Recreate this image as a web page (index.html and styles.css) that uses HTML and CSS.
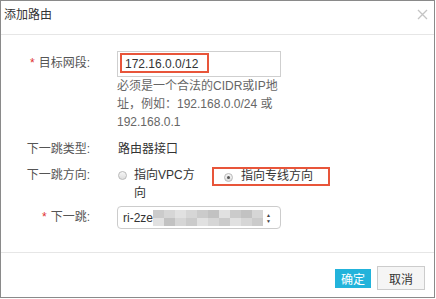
FILE: index.html
```html
<!DOCTYPE html>
<html lang="zh-CN">
<head>
  <meta charset="UTF-8" />
  <title>添加路由</title>
  <link rel="stylesheet" href="styles.css">
</head>
<body>

  <div class="dialog">
    <div class="dialog-header">
      <span class="dialog-title">添加路由</span>
      <svg class="close" width="11" height="11" viewBox="0 0 11 11">
        <path d="M1 1L10 10M10 1L1 10" stroke="#c4c4c4" stroke-width="1.3" fill="none" />
      </svg>
    </div>

    <div class="dialog-body">
      <div class="row row-cidr">
        <label class="label"><span class="req">*</span>目标网段:</label>
        <div class="control">
          <div class="input">
            <span class="mark-input">172.16.0.0/12</span>
          </div>
          <p class="help">必须是一个合法的CIDR或IP地址，例如：192.168.0.0/24 或 192.168.0.1</p>
        </div>
      </div>

      <div class="row row-type">
        <label class="label">下一跳类型:</label>
        <div class="control value">路由器接口</div>
      </div>

      <div class="row row-dir">
        <label class="label">下一跳方向:</label>
        <div class="control radios">
          <div class="radio-item">
            <span class="radio"></span>
            <span class="radio-text">指向VPC方向</span>
          </div>
          <div class="radio-item mark-radio">
            <span class="radio checked"></span>
            <span>指向专线方向</span>
          </div>
        </div>
      </div>

      <div class="row row-next">
        <label class="label"><span class="req">*</span>下一跳:</label>
        <div class="control">
          <div class="select">
            <span class="select-text">ri-2ze</span>
            <span class="mosaic">
              <i class="g2"></i><i class="g1"></i><i class="g3"></i><i class="g1"></i><i class="g2"></i><i class="g4"></i><i class="g3"></i><i class="g2"></i><i class="g4"></i><i class="g1"></i>
              <i class="g3"></i><i class="g4"></i><i class="g1"></i><i class="g2"></i><i class="g3"></i><i class="g1"></i><i class="g2"></i><i class="g3"></i><i class="g1"></i><i class="g2"></i>
            </span>
            <span class="arrows">▲<br>▼</span>
          </div>
        </div>
      </div>
    </div>

    <div class="dialog-footer">
      <button class="btn btn-primary">确定</button>
      <button class="btn btn-default">取消</button>
    </div>
  </div>

</body>
</html>
```

FILE: styles.css
```css
body {
  margin: 0;
  background-color: #ffffff;
  font-family: "Liberation Sans", "Noto Sans CJK SC", sans-serif;
  font-size: 12px;
  color: #333333;
}
.dialog {
  width: 433px;
  height: 296px;
  border: 1px solid #8a8a8a;
  display: flex;
  flex-direction: column;
}
.dialog-header {
  height: 33px;
  border-bottom: 1px solid #e6e6e6;
  display: flex;
  justify-content: space-between;
  align-items: flex-start;
  padding: 5px 6px 0 3px;
  box-sizing: border-box;
  height: 34px;
}
.dialog-title {
  font-size: 12px;
  line-height: 18px;
  color: #333333;
}
.close {
  margin-top: 3px;
}
.dialog-body {
  flex: 1;
  padding-top: 16px;
}
.row {
  display: flex;
  align-items: flex-start;
}
.label {
  width: 89px;
  margin-right: 27px;
  text-align: right;
  color: #555555;
  line-height: 18px;
  flex-shrink: 0;
}
.req {
  color: #e03030;
  margin-right: 4px;
}
.control {
  line-height: 18px;
}
.row-cidr .label {
  line-height: 25px;
}
.input {
  width: 160px;
  height: 23px;
  border: 1px solid #cfcfcf;
  padding: 1px 0 0 2px;
  box-sizing: content-box;
}
.mark-input {
  display: block;
  width: 82px;
  height: 16px;
  border: 2px solid #e8553a;
  padding-left: 3px;
  font-size: 12px;
  line-height: 18px;
  color: #333333;
}
.help {
  margin: 0;
  width: 162px;
  color: #666666;
  line-height: 18px;
}
.row-type {
  margin-top: 9px;
}
.value {
  margin-left: 1px;
}
.row-dir {
  margin-top: 8px;
}
.radios {
  display: flex;
  align-items: flex-start;
}
.radio-item {
  display: flex;
  align-items: flex-start;
}
.radio {
  width: 7px;
  height: 7px;
  border: 1px solid #b9b9b9;
  border-radius: 50%;
  background: linear-gradient(#f6f6f6, #dedede);
  margin: 5px 7px 0 1px;
  position: relative;
}
.radio.checked::after {
  content: "";
  position: absolute;
  left: 2px;
  top: 2px;
  width: 3px;
  height: 3px;
  border-radius: 50%;
  background-color: #555555;
}
.radio-text {
  width: 66px;
}
.mark-radio {
  margin-left: 12px;
  margin-top: 1px;
  width: 104px;
  height: 15px;
  border: 2px solid #e8553a;
  padding-left: 10px;
  line-height: 15px;
}
.mark-radio .radio {
  margin: 4px 8px 0 0;
}
.row-next {
  margin-top: 4px;
}
.row-next .label {
  line-height: 23px;
}
.select {
  width: 162px;
  height: 21px;
  border: 1px solid #cccccc;
  border-radius: 4px;
  display: flex;
  align-items: center;
  padding-left: 5px;
  box-sizing: content-box;
  width: 157px;
}
.select-text {
  font-size: 12px;
  color: #333333;
}
.mosaic {
  display: grid;
  grid-template-columns: repeat(10, 11px);
  grid-template-rows: 8px 8px;
  margin-left: 0;
}
.mosaic i {
  display: block;
}
.g1 { background-color: #d6d6d6; }
.g2 { background-color: #cbcbcb; }
.g3 { background-color: #e1e1e1; }
.g4 { background-color: #c2c2c2; }
.arrows {
  font-size: 5px;
  line-height: 6px;
  color: #444444;
  margin-left: 3px;
}
.dialog-footer {
  height: 45px;
  border-top: 1px solid #e6e6e6;
  display: flex;
  justify-content: flex-end;
  align-items: center;
  gap: 6px;
  padding: 0 9px 0 0;
  box-sizing: border-box;
  padding-top: 6px;
}
.btn {
  font-family: "Liberation Sans", "Noto Sans CJK SC", sans-serif;
  font-size: 12px;
  padding: 0;
  cursor: pointer;
}
.btn-primary {
  width: 36px;
  height: 19px;
  border: none;
  background-color: #22b3db;
  color: #ffffff;
}
.btn-default {
  width: 48px;
  height: 24px;
  border: 1px solid #cccccc;
  background-color: #f5f5f5;
  color: #333333;
}
```
